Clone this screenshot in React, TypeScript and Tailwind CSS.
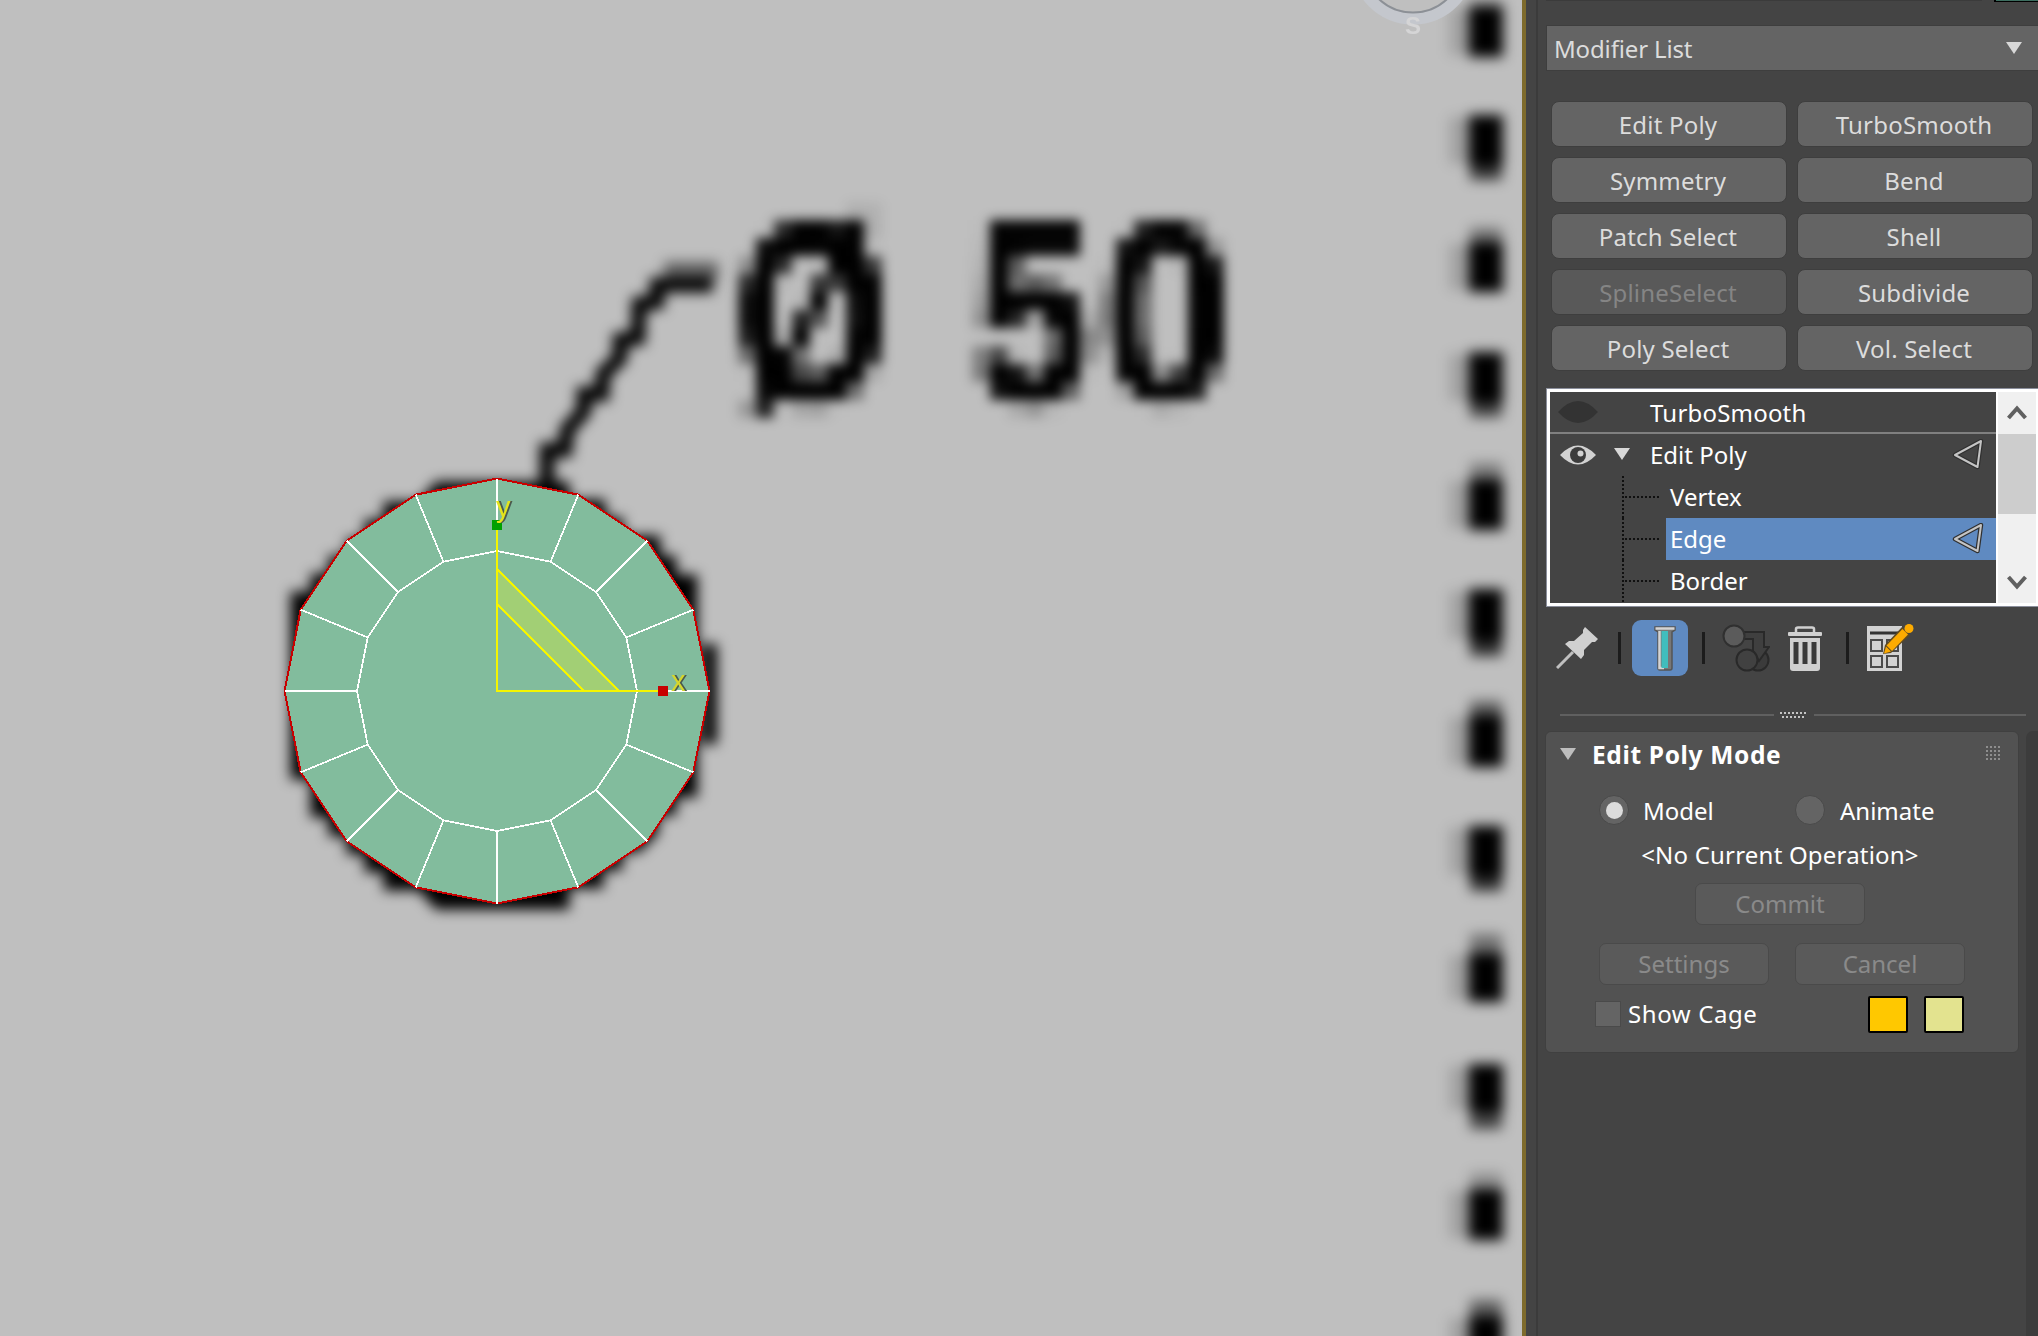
import React from "react";

const ring = (r: number) =>
  Array.from({ length: 16 }, (_, i) => {
    const a = (i * Math.PI) / 8;
    return [497 + r * Math.sin(a), 691 - r * Math.cos(a)] as const;
  });
const outer = ring(212.5);
const inner = ring(140);
const pts = (p: readonly (readonly [number, number])[]) => p.map((q) => q.join(",")).join(" ");

// Each dash: solid span (y1, y2) and a fainter neighbour span (g1, g2) with its opacity
const dashes = [
  { y1: 12, y2: 51, g1: 2, g2: 12, o: 0.2 },
  { y1: 121, y2: 160, g1: 160, g2: 176, o: 0.7 },
  { y1: 248, y2: 286, g1: 232, g2: 248, o: 0.4 },
  { y1: 358, y2: 397, g1: 397, g2: 413, o: 0.65 },
  { y1: 485, y2: 524, g1: 467, g2: 485, o: 0.35 },
  { y1: 595, y2: 635, g1: 635, g2: 652, o: 0.75 },
  { y1: 721, y2: 761, g1: 705, g2: 721, o: 0.5 },
  { y1: 832, y2: 871, g1: 871, g2: 887, o: 0.75 },
  { y1: 959, y2: 996, g1: 938, g2: 959, o: 0.4 },
  { y1: 1070, y2: 1106, g1: 1106, g2: 1125, o: 0.65 },
  { y1: 1195, y2: 1234, g1: 1177, g2: 1195, o: 0.25 },
  { y1: 1322, y2: 1360, g1: 1304, g2: 1322, o: 0.5 },
];

function Viewport() {
  return (
    <svg className="block h-[1336px] w-[1522px] shrink-0 bg-[#bfbfbf]" viewBox="0 0 1522 1336">
      <defs>
        <filter id="soft" x="0" y="0" width="1540" height="1400" filterUnits="userSpaceOnUse">
          <feGaussianBlur stdDeviation="6.5" />
        </filter>
        <filter id="pixels" x="720" y="184" width="540" height="270" filterUnits="userSpaceOnUse">
          <feGaussianBlur in="SourceGraphic" stdDeviation="3" result="src" />
          <feFlood x="728" y="192" width="2" height="2" />
          <feComposite x="720" y="184" width="18" height="18" />
          <feTile result="grid" />
          <feComposite in="src" in2="grid" operator="in" />
          <feMorphology operator="dilate" radius="8" />
          <feGaussianBlur stdDeviation="6" />
        </filter>
      </defs>

      <g filter="url(#soft)">
        {dashes.map((d) => (
          <g key={d.y1}>
            <rect x="1469" y={d.y1 - 6} width="34" height={d.y2 - d.y1 + 12} />
            <rect x="1470" y={d.g1 - 4} width="32" height={d.g2 - d.g1 + 8} opacity={d.o} />
            <rect x="1449" y={d.y1 - 4} width="22" height={d.y2 - d.y1 + 8} opacity="0.15" />
          </g>
        ))}
        <polyline
          points="547,486 547,450 565,450 567,430 584,411 584,394 602,394 603,374 620,358 620,340 638,338 639,304 657,302 657,285 713,285"
          fill="none"
          stroke="#000"
          strokeWidth="15"
        />
        <rect x="664" y="262" width="54" height="18" opacity="0.5" />
        <path d="M437 484H567V502H603V520H621V538H658V558H674V577H695V795H674V813H656V832L638 850H620V868H601V886H567V907H437L420 888H386V870H367V852H349V834H331V815H313V777H293V594H313V576H331V558H349V541H367V522H386V504H420Z" stroke="#000" strokeWidth="5" />
        <rect x="702" y="644" width="15" height="100" />
      </g>

      <g filter="url(#pixels)" fontFamily="Liberation Sans" fontWeight="700" fontSize="258" stroke="#000">
        <text transform="translate(735 402) scale(0.77 1)" strokeWidth="2">Ø</text>
        <text transform="translate(974 402) scale(0.82 1)" strokeWidth="3">5</text>
        <text transform="translate(1099 402) scale(0.94 1)" strokeWidth="0">0</text>
      </g>

      <g shapeRendering="crispEdges">
        <polygon points={pts(outer)} fill="#82bc9d" stroke="#c80000" strokeWidth="2" />
        <polygon points={pts(inner)} fill="none" stroke="#fff" strokeWidth="1.7" />
        {outer.map((p, i) => (
          <line key={i} x1={p[0]} y1={p[1]} x2={inner[i][0]} y2={inner[i][1]} stroke="#fff" strokeWidth="1.7" />
        ))}
        <polygon points="497,569 619,691 584,691 497,604" fill="#a2cf75" stroke="#f5f500" strokeWidth="1.7" />
        <path d="M497 530V691H660" fill="none" stroke="#f5f500" strokeWidth="2" />
        <rect x="492" y="520" width="10" height="10" fill="#00a000" />
        <rect x="658" y="686" width="10" height="10" fill="#c80000" />
      </g>
      <g fontFamily="Liberation Sans" fontSize="29">
        <text x="498" y="517" fill="#4a5a50">y</text>
        <text x="496" y="517" fill="#e4e41c">y</text>
        <text x="673" y="691" fill="#4a5a50">x</text>
        <text x="671" y="691" fill="#d6d62c">x</text>
      </g>

      <circle cx="1413" cy="-38" r="56.500" fill="none" stroke="#c4c7cd" strokeWidth="12" />
      <circle cx="1413" cy="-37.500" r="50" fill="none" stroke="#8c9096" strokeWidth="2" />
      <text x="1413" y="34" fill="#d5d5d6" fontFamily="Liberation Sans" fontWeight="700" fontSize="24" textAnchor="middle">S</text>
    </svg>
  );
}

const Down = ({ className = "", fill = "#d8d8d8" }: { className?: string; fill?: string }) => (
  <svg className={`h-[12px] w-[16px] shrink-0 ${className}`} viewBox="0 0 16 12">
    <path d="M0 0H16L8 12Z" fill={fill} />
  </svg>
);

const buttons = [
  "Edit Poly", "TurboSmooth", "Symmetry", "Bend", "Patch Select",
  "Shell", "SplineSelect", "Subdivide", "Poly Select", "Vol. Select",
];

const Level = () => (
  <svg className="mr-[12px] ml-auto h-[32px] w-[32px]" viewBox="0 0 32 32" strokeLinejoin="round" fill="none">
    <path d="M3 16L29 2L25.500 28Z" stroke="#303030" strokeWidth="4.500" />
    <path d="M3 16L29 2L25.500 28Z" stroke="#c4c4c4" strokeWidth="2" />
  </svg>
);

function Child({ name, active = false }: { name: string; active?: boolean }) {
  return (
    <div className="flex h-[42px] shrink-0">
      <svg className="h-[42px] w-[116px] shrink-0" viewBox="0 0 116 42" stroke="#101010" strokeWidth="2" strokeDasharray="2 2">
        <path d="M73 0V42" />
        <path d="M75 21H111" />
      </svg>
      <div className={`flex grow items-center pl-[4px] ${active ? "bg-[#5f8ac1]" : ""}`}>
        <span>{name}</span>
        {active && <Level />}
      </div>
    </div>
  );
}

function Stack() {
  return (
    <div className="ml-[8px] flex h-[219px] w-[500px] border border-r-0 border-[#8b8f9c] bg-white py-[3px] pl-[3px]">
      <div className="flex w-[446px] shrink-0 flex-col overflow-hidden bg-[#444444] text-white">
        <div className="flex h-[42px] shrink-0 items-center border-b-2 border-[#808080]">
          <svg className="ml-[8px] h-[22px] w-[40px]" viewBox="0 0 40 22">
            <path d="M0 11Q20-11 40 11Q20 33 0 11Z" fill="#333" />
          </svg>
          <span className="ml-[52px] pt-[1px] tracking-[0.2px]">TurboSmooth</span>
        </div>
        <div className="flex h-[42px] shrink-0 items-center">
          <svg className="ml-[10px] h-[20px] w-[36px]" viewBox="0 0 36 20">
            <path d="M0 10Q18-9 36 10Q18 29 0 10Z" fill="#d2d2d2" />
            <circle cx="18" cy="10" r="8" fill="#3c3c3c" />
            <circle cx="20.500" cy="8.500" r="3" fill="#d2d2d2" />
          </svg>
          <Down className="-mt-[2px] ml-[18px]" />
          <span className="ml-[20px]">Edit Poly</span>
          <Level />
        </div>
        <Child name="Vertex" />
        <Child name="Edge" active />
        <Child name="Border" />
      </div>
      <div className="ml-[2px] flex w-[38px] flex-col bg-[#f0f0f0]">
        <svg className="h-[42px] w-[38px] shrink-0" viewBox="0 0 38 42">
          <path d="M10.500 26L19 16.500L27.500 26" fill="none" stroke="#606060" strokeWidth="4" />
        </svg>
        <div className="h-[80px] bg-[#cdcdcd]" />
        <svg className="mt-auto h-[42px] w-[38px] shrink-0" viewBox="0 0 38 42">
          <path d="M10.500 16L19 25.500L27.500 16" fill="none" stroke="#606060" strokeWidth="4" />
        </svg>
      </div>
    </div>
  );
}

const Bar = ({ className }: { className: string }) => <div className={`h-[32px] w-[3px] bg-[#1c1c1c] ${className}`} />;

function Tools() {
  return (
    <div className="mt-[13px] flex h-[56px] items-center pl-[18px]">
      <svg className="h-[42px] w-[42px]" viewBox="0 0 42 42">
        <path d="M1 41L17 25" stroke="#c0c0c0" strokeWidth="3" />
        <path d="M29 0L42 12L39 15L36 15L28 23L28 28L25 32L9 17L13 14L18 14L27 6L27 3Z" fill="#d0d0d0" />
      </svg>
      <Bar className="ml-[20px]" />
      <div className="ml-[11px] flex h-[56px] w-[56px] items-center justify-center rounded-[9px] bg-[#5f8ac1]">
        <svg className="ml-[10px] h-[48px] w-[24px]" viewBox="0 0 24 48">
          <path d="M2 3H22V6L19 8V44Q19 46 17 46H7Q5 46 5 44V8L2 6Z" fill="#777" stroke="#555" strokeWidth="1.500" />
          <path d="M2.500 4.500H21.500M6.500 7V44H11" stroke="#d4d4d4" strokeWidth="2.500" fill="none" />
          <rect x="8.500" y="7" width="6.500" height="37" fill="#41bdbd" />
        </svg>
      </div>
      <Bar className="ml-[14px]" />
      <svg className="ml-[17px] h-[48px] w-[48px]" viewBox="0 0 48 48" strokeWidth="2">
        <circle cx="36" cy="36" r="10.500" fill="#3b3b3b" stroke="#292929" />
        <path d="M22 8H42V23H47L37 37L31 27V15H22Z" fill="#3f3f3f" stroke="#292929" />
        <circle cx="25" cy="36" r="10.500" fill="#414141" stroke="#292929" />
        <circle cx="12" cy="12" r="10.500" fill="#5b5b5b" stroke="#303030" />
      </svg>
      <svg className="ml-[18px] h-[45px] w-[34px]" viewBox="0 0 34 45">
        <path d="M8 6V3Q8 1.500 10 1.500H24Q26 1.500 26 3V6" fill="none" stroke="#d0d0d0" strokeWidth="2.500" />
        <rect x="0" y="6" width="34" height="4" rx="1" fill="#d0d0d0" />
        <path d="M2 12H32V42Q32 45 29 45H5Q2 45 2 42Z" fill="#d0d0d0" />
        <path d="M8 16V38M17 16V38M26 16V38" stroke="#3a3a3a" strokeWidth="5" />
      </svg>
      <Bar className="ml-[24px]" />
      <svg className="ml-[17px] h-[48px] w-[48px]" viewBox="0 0 48 48">
        <rect x="1" y="2" width="35" height="45" fill="#d2d2d2" />
        <path d="M4 9H32" stroke="#333" strokeWidth="3" />
        <g fill="#d2d2d2" stroke="#4b4b4b" strokeWidth="2">
          <rect x="5" y="16" width="11" height="11" />
          <rect x="21" y="16" width="11" height="11" />
          <rect x="5" y="32" width="11" height="11" />
          <rect x="21" y="32" width="11" height="11" />
        </g>
        <path d="M36 3L44 11L25 29L17 30L19 21Z" fill="#604a20" />
        <path d="M36.500 5L42 10.500L26 27L20.500 21.500Z" fill="#fdab00" />
        <circle cx="43" cy="4.500" r="4.500" fill="#fdab00" />
        <path d="M20 22.500L25 27.500L18 29.500Z" fill="#fdab00" />
      </svg>
    </div>
  );
}

const dots = (cols: number, rows: number, step: number, shift: number) =>
  Array.from({ length: cols * rows }, (_, i) => {
    const r = Math.floor(i / cols);
    return [(i % cols) * step + (r % 2) * shift, r * step];
  });

const disabledBtn =
  "flex h-[42px] w-[170px] shrink-0 items-center justify-center rounded-[7px] border border-[#4a4a4a] bg-[#5a5a5a] text-[#8a8a8a]";

function Rollout() {
  return (
    <div className="flex h-[605px] justify-between">
      <div className="ml-[7px] h-[322px] w-[474px] rounded-[6px] border border-[#404040] bg-[#525252] text-white">
        <div className="flex h-[46px] items-center pl-[14px]">
          <Down fill="#bdbdbd" className="-mt-[3px]" />
          <span className="ml-[16px] text-[24.500px] font-bold tracking-[0.65px]">Edit Poly Mode</span>
          <svg className="-mt-[3px] mr-[16px] ml-auto h-[16px] w-[16px]" viewBox="0 0 16 16" shapeRendering="crispEdges">
            {dots(4, 4, 4, 0).map(([x, y], i) => (
              <rect key={i} x={x} y={y} width="2" height="2" fill="#8e8e8e" />
            ))}
          </svg>
        </div>
        <div className="mt-[11px] flex h-[42px] items-center">
          <div className="ml-[53px] flex h-[30px] w-[30px] items-center justify-center rounded-full border border-[#4a4a4a] bg-[#646464]">
            <div className="h-[17px] w-[17px] rounded-full bg-[#dcdcdc]" />
          </div>
          <span className="ml-[14px] w-[152px] pt-[1px]">Model</span>
          <div className="h-[30px] w-[30px] rounded-full border border-[#4a4a4a] bg-[#646464]" />
          <span className="ml-[15px] pt-[1px]">Animate</span>
        </div>
        <div className="mt-[3px] flex h-[42px] items-center justify-center pr-[4px] tracking-[0.2px] whitespace-nowrap">&lt;No Current Operation&gt;</div>
        <div className="mt-[7px] flex justify-center pr-[4px]">
          <div className={disabledBtn}>Commit</div>
        </div>
        <div className="mt-[18px] flex gap-[26px] pl-[53px]">
          <div className={disabledBtn}>Settings</div>
          <div className={disabledBtn}>Cancel</div>
        </div>
        <div className="mt-[8px] flex h-[42px] items-center pl-[49px]">
          <div className="h-[26px] w-[26px] border border-[#4a4a4a] bg-[#646464]" />
          <span className="ml-[7px] tracking-[0.6px]">Show Cage</span>
          <div className="ml-auto h-[37px] w-[40px] rounded-[2px] border-2 border-black bg-[#ffc800]" />
          <div className="mr-[54px] ml-[16px] h-[37px] w-[40px] rounded-[2px] border-2 border-black bg-[#e3e38f]" />
        </div>
      </div>
      <div className="w-[12px] rounded-tl-[7px] bg-[#3c3c3c]" />
    </div>
  );
}

export default function App() {
  return (
    <div className="flex h-[1336px] w-[2038px] overflow-hidden bg-[#444444] font-['Noto_Sans'] text-[24px] leading-[32px] text-[#dcdcdc]">
      <Viewport />
      <div className="w-[4px] shrink-0 bg-[#7e6b2d]" />
      <div className="w-[10px] shrink-0" />
      <div className="w-[2px] shrink-0 bg-[#3b3b3b]" />
      <aside className="flex w-[500px] shrink-0 flex-col">
        <div className="flex h-[25px] shrink-0 items-start justify-between pl-[8px]">
          <div className="h-px w-[436px] bg-[#3b3b3b]" />
          <div className="h-[2px] w-[44px] border-b border-l-2 border-black bg-[#3d6e60]" />
        </div>
        <div className="ml-[8px] flex h-[46px] items-center border border-r-0 border-[#3e3e3e] bg-[#646464] pr-[16px] pl-[7px]">
          <span className="pt-[1px] tracking-[-0.15px]">Modifier List</span>
          <Down className="ml-auto" />
        </div>
        <div className="mt-[30px] grid grid-cols-[236px_236px] gap-x-[10px] gap-y-[10px] pl-[13px] tracking-[0.2px]">
          {buttons.map((b) => (
            <div
              key={b}
              className={
                b === "SplineSelect"
                  ? "flex h-[46px] items-center justify-center rounded-[8px] border border-[#3e3e3e] bg-[#595959] pt-[2px] pr-[2px] text-[#858585]"
                  : "flex h-[46px] items-center justify-center rounded-[8px] border border-[#3e3e3e] bg-[#646464] pt-[2px] pr-[2px]"
              }
            >
              {b}
            </div>
          ))}
        </div>
        <div className="h-[17px] shrink-0" />
        <Stack />
        <Tools />
        <div className="mt-[34px] mb-[11px] flex h-[10px] items-center pl-[22px]">
          <div className="h-[2px] w-[214px] bg-[#606060]" />
          <svg className="mx-[6px] h-[8px] w-[28px]" viewBox="0 0 28 8" shapeRendering="crispEdges">
            {dots(7, 2, 4, 2)
              .slice(0, 13)
              .map(([x, y], i) => (
                <rect key={i} x={x} y={y + 1} width="2" height="2" fill="#c4c4c4" />
              ))}
          </svg>
          <div className="h-[2px] w-[212px] bg-[#606060]" />
        </div>
        <Rollout />
      </aside>
    </div>
  );
}
